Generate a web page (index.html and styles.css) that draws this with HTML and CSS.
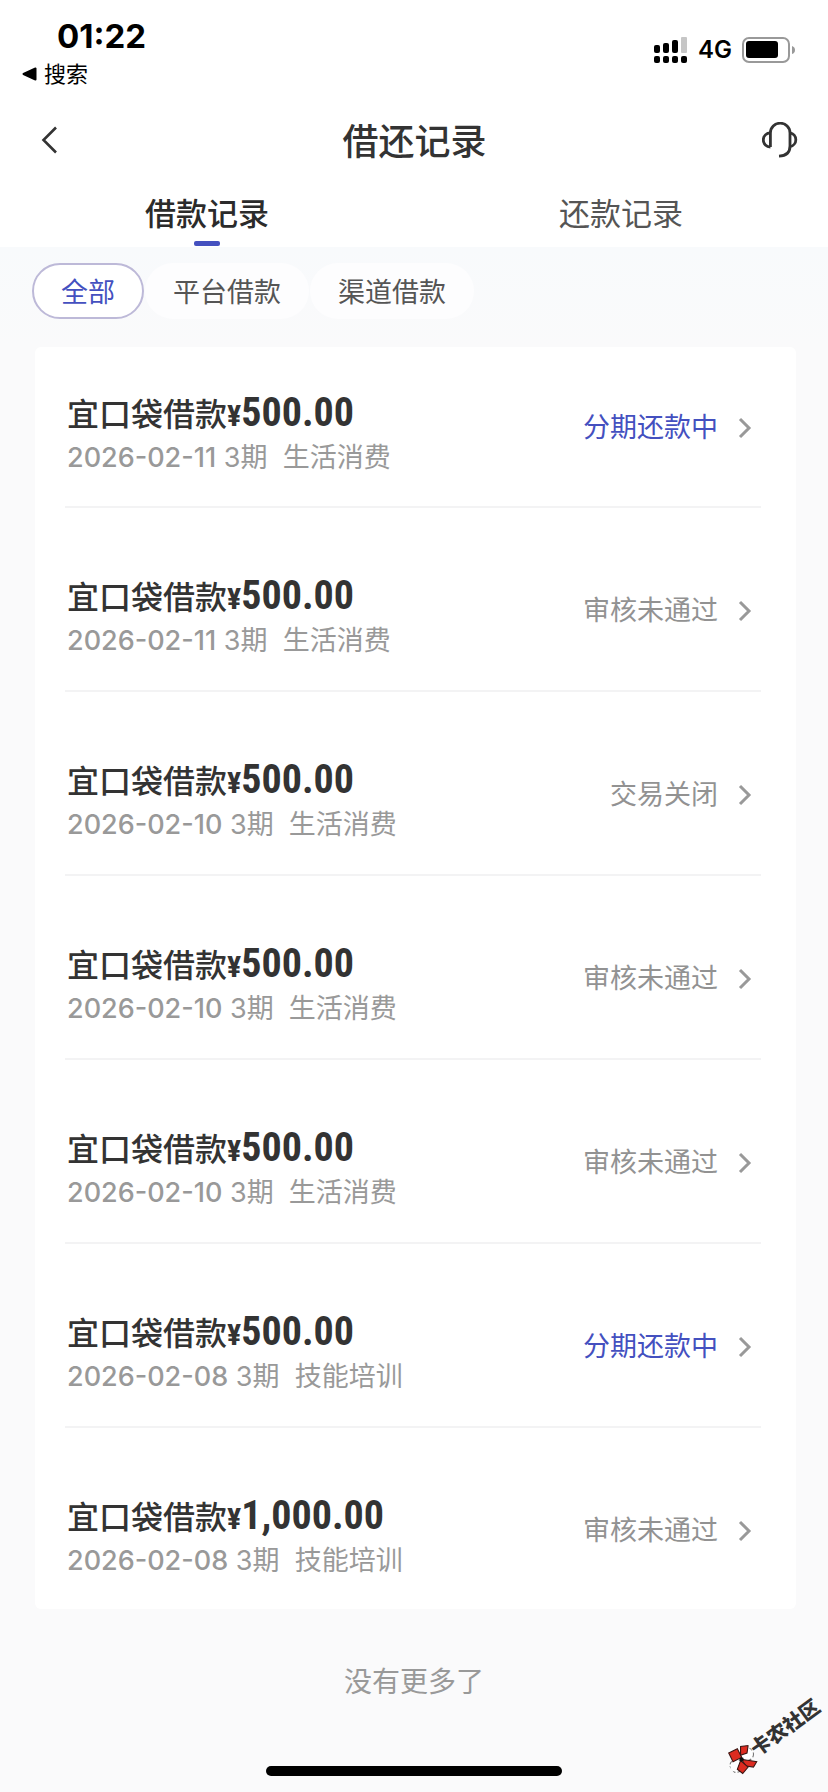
FILE: index.html
```html
<!DOCTYPE html>
<html lang="zh-CN">
<head>
<meta charset="utf-8">
<meta name="viewport" content="width=device-width, initial-scale=1">
<title>借还记录</title>
<link rel="stylesheet" href="styles.css">
</head>
<body>
<svg class="defs" width="0" height="0" aria-hidden="true">
  <symbol id="chevron" viewBox="0 0 14 24"><path d="M2 3 L11 12 L2 21" fill="none" stroke="currentColor" stroke-width="3"/></symbol>
</svg>
<div class="page">
  <header class="top">
    <div class="status">
      <div class="status-left">
        <time class="clock">01:22</time>
        <a class="return" href="#">
          <svg width="15" height="14" viewBox="0 0 15 14"><path d="M1.5 7 L13.5 1.5 V12.5 Z" stroke="#000" stroke-width="2" stroke-linejoin="round"/></svg>
          <span>搜索</span>
        </a>
      </div>
      <div class="status-right">
        <svg width="34" height="26" viewBox="0 0 34 26">
          <rect x="0" y="8" width="6" height="8" rx="2"/><rect x="9" y="6" width="6" height="10" rx="2"/><rect x="18" y="3" width="6" height="13" rx="2"/><rect x="27" y="0" width="6" height="16" rx="1" fill="#c6c6c6"/>
          <rect x="0" y="19" width="6" height="7" rx="2"/><rect x="9" y="19" width="6" height="7" rx="2"/><rect x="18" y="19" width="6" height="7" rx="2"/><rect x="27" y="19" width="6" height="7" rx="2"/>
        </svg>
        <span class="network">4G</span>
        <svg width="54" height="26" viewBox="0 0 54 26">
          <rect x="1" y="1" width="46" height="24" rx="6" fill="none" stroke="#999" stroke-width="2"/>
          <rect x="4" y="4" width="32" height="17" rx="3"/>
          <path d="M50 9 Q53 10 53 13 T50 17 Z" fill="#999"/>
        </svg>
      </div>
    </div>
    <div class="nav">
      <button class="icon-button" type="button" aria-label="返回">
        <svg width="18" height="28" viewBox="0 0 18 28"><path d="M15 1.5 L2.5 14 L15 26.5" fill="none" stroke="#333" stroke-width="2.6"/></svg>
      </button>
      <h1 class="title">借还记录</h1>
      <button class="icon-button icon-end" type="button" aria-label="客服">
        <svg width="36" height="36" viewBox="0 0 36 36" fill="none" stroke="#333" stroke-width="2.8">
          <path d="M8.4 25 V11 A9.8 9.8 0 0 1 28 11 V24 Q28 33.8 17 34.2"/>
          <path d="M8.4 10.8 A7.1 7.1 0 0 0 8.4 25"/>
          <path d="M28 10.8 A7 7 0 0 1 28 24.6"/>
        </svg>
      </button>
    </div>
    <nav class="tabs">
      <a class="tab tab-active" href="#">借款记录</a>
      <a class="tab" href="#">还款记录</a>
    </nav>
  </header>
  <main class="content">
    <div class="chips">
      <button class="chip chip-active" type="button">全部</button>
      <button class="chip" type="button">平台借款</button>
      <button class="chip" type="button">渠道借款</button>
    </div>
    <ul class="card">
      <li class="row"><div class="info"><div class="name">宜口袋借款<span class="yen">¥</span><span class="amount">500.00</span></div><div class="meta"><time>2026-02-11</time> 3期&nbsp; 生活消费</div></div><a class="state state-active" href="#">分期还款中<svg class="chevron"><use href="#chevron"/></svg></a></li>
      <li class="row"><div class="info"><div class="name">宜口袋借款<span class="yen">¥</span><span class="amount">500.00</span></div><div class="meta"><time>2026-02-11</time> 3期&nbsp; 生活消费</div></div><a class="state" href="#">审核未通过<svg class="chevron"><use href="#chevron"/></svg></a></li>
      <li class="row"><div class="info"><div class="name">宜口袋借款<span class="yen">¥</span><span class="amount">500.00</span></div><div class="meta"><time>2026-02-10</time> 3期&nbsp; 生活消费</div></div><a class="state" href="#">交易关闭<svg class="chevron"><use href="#chevron"/></svg></a></li>
      <li class="row"><div class="info"><div class="name">宜口袋借款<span class="yen">¥</span><span class="amount">500.00</span></div><div class="meta"><time>2026-02-10</time> 3期&nbsp; 生活消费</div></div><a class="state" href="#">审核未通过<svg class="chevron"><use href="#chevron"/></svg></a></li>
      <li class="row"><div class="info"><div class="name">宜口袋借款<span class="yen">¥</span><span class="amount">500.00</span></div><div class="meta"><time>2026-02-10</time> 3期&nbsp; 生活消费</div></div><a class="state" href="#">审核未通过<svg class="chevron"><use href="#chevron"/></svg></a></li>
      <li class="row"><div class="info"><div class="name">宜口袋借款<span class="yen">¥</span><span class="amount">500.00</span></div><div class="meta"><time>2026-02-08</time> 3期&nbsp; 技能培训</div></div><a class="state state-active" href="#">分期还款中<svg class="chevron"><use href="#chevron"/></svg></a></li>
      <li class="row"><div class="info"><div class="name">宜口袋借款<span class="yen">¥</span><span class="amount">1,000.00</span></div><div class="meta"><time>2026-02-08</time> 3期&nbsp; 技能培训</div></div><a class="state" href="#">审核未通过<svg class="chevron"><use href="#chevron"/></svg></a></li>
    </ul>
    <p class="end">没有更多了</p>
  </main>
  <div class="home-bar"></div>
  <div class="watermark">
    <svg width="28" height="28" viewBox="0 0 26 26">
      <g transform="rotate(36 13 13)">
        <circle cx="18" cy="8" r="6" fill="#fff" stroke="#777" stroke-width="1" stroke-dasharray="3 2"/>
        <circle cx="8" cy="19" r="6" fill="#fff" stroke="#777" stroke-width="1" stroke-dasharray="3 2"/>
        <g fill="#dc2b20" stroke="#3a1512" stroke-width="1">
          <path d="M1 7 L9 3 L13 11 L5 15 Z"/><path d="M12 9 L12 1 L19 0 L18 7 Z"/><path d="M13 13 L20 14 L27 15 L24 20 L17 19 Z"/><path d="M12 14 L19 20 L14 26 L9 22 Z"/>
        </g>
        <circle cx="13" cy="13" r="2" fill="#111"/>
      </g>
    </svg>
    <span>卡农社区</span>
  </div>
</div>
</body>
</html>
```
FILE: styles.css
```css
* { box-sizing: border-box; }
body {
  margin: 0;
  background: #fafafb;
  color: #333;
  font-family: Inter, "Noto Sans CJK SC", sans-serif;
}
a { color: inherit; text-decoration: none; }
button { border: 0; margin: 0; padding: 0; background: none; color: inherit; font: inherit; }
svg { display: block; flex: none; }
.defs { position: absolute; }
.page { position: relative; display: flex; flex-direction: column; min-height: 100vh; overflow: hidden; }
.top { background: #fff; }

.status { display: flex; justify-content: space-between; padding: 16px 32px 0 22px; height: 100px; color: #000; }
.clock { display: block; padding-left: 35px; font-size: 33px; line-height: 40px; font-weight: 700; }
.return { display: flex; align-items: center; gap: 7px; font-size: 22px; line-height: 36px; }
.status-right { display: flex; align-items: center; gap: 10px; height: 68px; }
.network { font-size: 24px; line-height: 32px; font-weight: 600; }

.nav { display: grid; grid-template-columns: 1fr auto 1fr; align-items: center; height: 80px; padding: 0 30px 0 41px; }
.icon-button { justify-self: start; }
.icon-end { justify-self: end; }
.title { margin: 0; padding: 3px 10px 0 0; font-size: 36px; line-height: 48px; font-weight: 500; }

.tabs { display: grid; grid-template-columns: 1fr 1fr; height: 67px; }
.tab { display: flex; flex-direction: column; align-items: center; justify-content: space-between; padding: 12px 0 1px; font-size: 31px; line-height: 44px; color: #555; }
.tab-active { font-weight: 500; color: #2b2b2b; }
.tab-active::after { content: ""; width: 26px; height: 5px; border-radius: 2px; background: #4450bf; }

.content { flex: 1; padding: 16px 32px 0; background: linear-gradient(#f8fafc, #fafafb 100px); }
.chips { display: flex; gap: 1px; }
.chip { height: 56px; padding: 3px 26px 0; border: 2px solid transparent; border-radius: 28px; background: #fdfdfe; font-size: 27px; line-height: 40px; color: #555; }
.chip-active { padding: 3px 27px 0; border-color: #bdb9d8; background: #fff; color: #4450bf; }

.card { list-style: none; margin: 28px 0 0 3px; padding: 0 35px 0 30px; border-radius: 6px; background: #fff; }
.row { display: flex; justify-content: space-between; align-items: center; height: 184px; padding: 24px 9px 0 2px; border-bottom: 2px solid #f3f3f4; }
.row:first-child { height: 161px; padding-top: 2px; }
.row:last-child { height: 181px; border-bottom: 0; }
.info { padding-top: 12px; }
.name { font-size: 32px; line-height: 48px; font-weight: 500; }
.yen, .amount { font-family: "Roboto Condensed", "Liberation Sans Narrow", Roboto, sans-serif; font-weight: 700; line-height: 40px; }
.yen { font-size: 30px; }
.amount { font-size: 40px; }
.meta { font-size: 27px; line-height: 38px; color: #999; }
.meta time { font-weight: 500; }
.state { display: flex; align-items: center; gap: 20px; font-size: 27px; line-height: 40px; color: #929292; }
.state-active { color: #4450bf; }
.chevron { width: 14px; height: 24px; color: #999; }

.end { margin: 51px 0 0; font-size: 28px; line-height: 44px; text-align: center; color: #999; }
.home-bar { width: 296px; max-width: 60%; height: 10px; margin: 0 auto 16px; border-radius: 5px; background: #000; }
.watermark { position: absolute; right: 0; bottom: 42px; display: flex; align-items: center; font-size: 20px; line-height: 26px; font-weight: 900; color: #333; transform: rotate(-36deg); }
```
